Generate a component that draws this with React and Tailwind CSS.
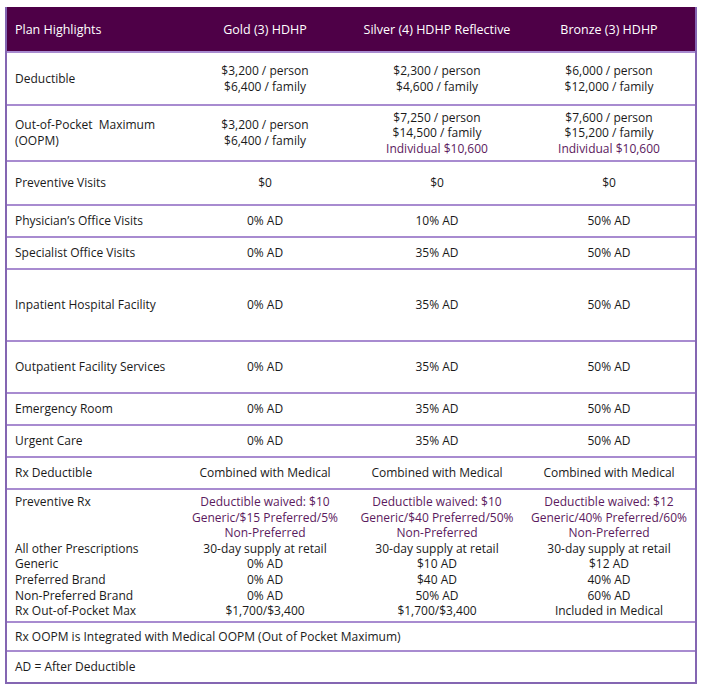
const plans = ["Gold (3) HDHP", "Silver (4) HDHP Reflective", "Bronze (3) HDHP"];

const rows = [
  {
    label: ["Deductible"],
    h: "h-[53px]",
    values: [
      [["$3,200 / person"], ["$6,400 / family"]],
      [["$2,300 / person"], ["$4,600 / family"]],
      [["$6,000 / person"], ["$12,000 / family"]],
    ],
  },
  {
    label: ["Out-of-Pocket  Maximum", "(OOPM)"],
    h: "h-[56px]",
    values: [
      [["$3,200 / person"], ["$6,400 / family"]],
      [["$7,250 / person"], ["$14,500 / family"], ["Individual $10,600", true]],
      [["$7,600 / person"], ["$15,200 / family"], ["Individual $10,600", true]],
    ],
  },
  { label: ["Preventive Visits"], h: "h-[44px]", values: [[["$0"]], [["$0"]], [["$0"]]] },
  { label: ["Physician’s Office Visits"], h: "h-[32px]", values: [[["0% AD"]], [["10% AD"]], [["50% AD"]]] },
  { label: ["Specialist Office Visits"], h: "h-[32px]", values: [[["0% AD"]], [["35% AD"]], [["50% AD"]]] },
  { label: ["Inpatient Hospital Facility"], h: "h-[72px]", values: [[["0% AD"]], [["35% AD"]], [["50% AD"]]] },
  { label: ["Outpatient Facility Services"], h: "h-[52px]", values: [[["0% AD"]], [["35% AD"]], [["50% AD"]]] },
  { label: ["Emergency Room"], h: "h-[32px]", values: [[["0% AD"]], [["35% AD"]], [["50% AD"]]] },
  { label: ["Urgent Care"], h: "h-[32px]", values: [[["0% AD"]], [["35% AD"]], [["50% AD"]]] },
  {
    label: ["Rx Deductible"],
    h: "h-[32px]",
    values: [[["Combined with Medical"]], [["Combined with Medical"]], [["Combined with Medical"]]],
  },
];

const rxLabels = [
  "Preventive Rx",
  "",
  "",
  "All other Prescriptions",
  "Generic",
  "Preferred Brand",
  "Non-Preferred Brand",
  "Rx Out-of-Pocket Max",
];

const rxValues = [
  [
    ["Deductible waived: $10", true],
    ["Generic/$15 Preferred/5%", true],
    ["Non-Preferred", true],
    ["30-day supply at retail"],
    ["0% AD"],
    ["0% AD"],
    ["0% AD"],
    ["$1,700/$3,400"],
  ],
  [
    ["Deductible waived: $10", true],
    ["Generic/$40 Preferred/50%", true],
    ["Non-Preferred", true],
    ["30-day supply at retail"],
    ["$10 AD"],
    ["$40 AD"],
    ["50% AD"],
    ["$1,700/$3,400"],
  ],
  [
    ["Deductible waived: $12", true],
    ["Generic/40% Preferred/60%", true],
    ["Non-Preferred", true],
    ["30-day supply at retail"],
    ["$12 AD"],
    ["40% AD"],
    ["60% AD"],
    ["Included in Medical"],
  ],
];

function Lines({ lines }) {
  return (
    <div className="flex flex-col items-center text-center">
      {lines.map(([text, purple], i) => (
        <p key={i} className={purple ? "text-[#5b1a5e]" : ""}>
          {text}
        </p>
      ))}
    </div>
  );
}

export default function App() {
  return (
    <div className="min-h-screen bg-white pt-[7px] pl-[5px] font-['Open_Sans',sans-serif] text-[12px] leading-[15.6px] text-[#1a1a1a]">
      <div className="w-[692px] border-x-2 border-b-2 border-[#8466b2]">
        <div className="grid h-[46px] grid-cols-4 items-center border-b-2 border-[#a88bd0] bg-[#4e0047] pt-[2px] text-[12.5px] text-white">
          <p className="pl-[8px]">Plan Highlights</p>
          {plans.map((p) => (
            <p key={p} className="text-center">
              {p}
            </p>
          ))}
        </div>

        {rows.map((row, i) => (
          <div
            key={i}
            className={`grid grid-cols-4 items-center border-b-2 border-[#a88bd0] ${row.h}`}
          >
            <div className="pl-[8px]">
              {row.label.map((l) => (
                <p key={l} className="whitespace-pre">
                  {l}
                </p>
              ))}
            </div>
            {row.values.map((v, j) => (
              <Lines key={j} lines={v} />
            ))}
          </div>
        ))}

        <div className="grid h-[133px] grid-cols-4 items-start border-b-2 border-[#a88bd0] pt-[4px]">
          <div className="pl-[8px]">
            {rxLabels.map((l, i) => (
              <p key={i} className="h-[15.6px]">
                {l}
              </p>
            ))}
          </div>
          {rxValues.map((v, j) => (
            <Lines key={j} lines={v} />
          ))}
        </div>

        <div className="flex h-[29px] items-center border-b-2 border-[#a88bd0] pl-[8px]">
          Rx OOPM is Integrated with Medical OOPM (Out of Pocket Maximum)
        </div>
        <div className="flex h-[30px] items-center pl-[8px]">AD = After Deductible</div>
      </div>
    </div>
  );
}
